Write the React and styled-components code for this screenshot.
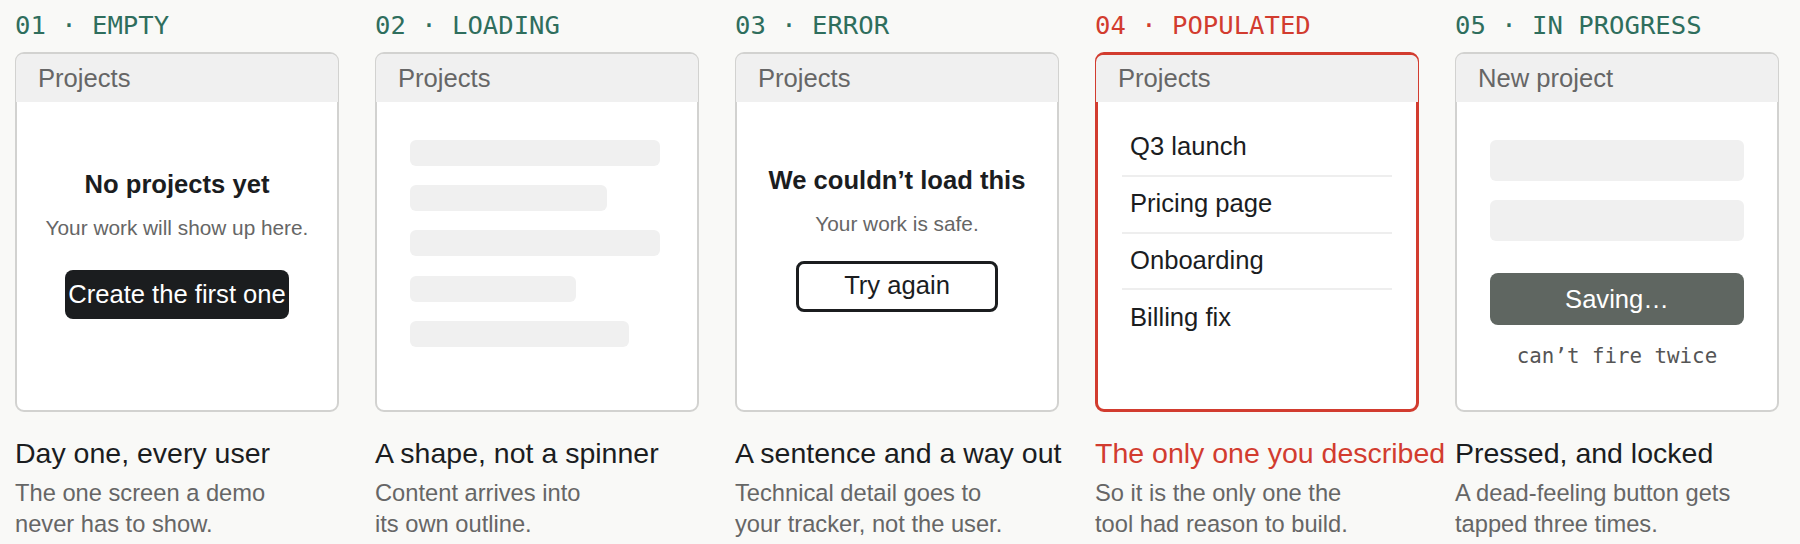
import React from 'react';
import styled, { createGlobalStyle } from 'styled-components';

const GlobalStyle = createGlobalStyle`
  body {
    margin: 0;
    background-color: #f9f9f7;
    font-family: 'Liberation Sans', Arial, sans-serif;
  }
`;

const mono = `'DejaVu Sans Mono', 'Liberation Mono', monospace`;
const ink = '#1b1d1f';
const red = '#d23c2f';

const Page = styled.div`
  display: grid;
  grid-template-columns: repeat(5, 324px);
  column-gap: 36px;
  padding: 10px 0 0 15px;
`;

const Column = styled.section`
  display: flex;
  flex-direction: column;
`;

const StateLabel = styled.div`
  font-family: ${mono};
  font-size: 25.6px;
  line-height: 30.7px;
  color: ${p => (p.$hot ? red : '#2f6e5d')};
  margin-bottom: 11px;
`;

const Card = styled.div`
  box-sizing: border-box;
  height: 360px;
  display: flex;
  flex-direction: column;
  background: #ffffff;
  border: ${p => p.$bw}px solid ${p => (p.$hot ? red : '#d2d2d0')};
  border-radius: 9px;
`;

const CardHeader = styled.div`
  margin: 0 ${p => -(p.$bw - 1)}px;
  padding: ${p => 12 - p.$bw}px 22px 9px;
  background: #f0f0f0;
  border-radius: 7px 7px 0 0;
  font-size: 25.6px;
  line-height: 29px;
  color: #666666;
`;

const NoticeBody = styled.div`
  display: flex;
  flex-direction: column;
  align-items: center;
  padding-top: ${p => p.$top}px;
`;

const NoticeTitle = styled.div`
  font-size: 25.6px;
  line-height: 29.4px;
  font-weight: 700;
  color: ${ink};
`;

const NoticeText = styled.div`
  margin-top: ${p => p.$gap}px;
  font-size: 20.8px;
  line-height: 24px;
  color: #666666;
`;

const SolidButton = styled.button`
  margin-top: 30.2px;
  padding: 9.6px 3.5px;
  border: none;
  border-radius: 8px;
  background: ${ink};
  color: #ffffff;
  font-family: inherit;
  font-size: 25.6px;
  line-height: 29.4px;
`;

const GhostButton = styled.button`
  margin-top: 24.6px;
  padding: 7.8px 45px;
  border: 3px solid ${ink};
  border-radius: 8px;
  background: #ffffff;
  color: ${ink};
  font-family: inherit;
  font-size: 25.6px;
  line-height: 29.4px;
`;

const StackBody = styled.div`
  display: flex;
  flex-direction: column;
  align-items: flex-start;
  padding: 38px 33px 0;
`;

const Bone = styled.div`
  width: ${p => p.$w}px;
  height: 26px;
  margin-bottom: 19.3px;
  border-radius: 6px;
  background: #f0f0f0;
`;

const List = styled.ul`
  list-style: none;
  margin: 18px 24px 0;
  padding: 0;
`;

const Item = styled.li`
  padding: 12.75px 8px;
  border-bottom: 2px solid #eeeeee;
  font-size: 25.6px;
  line-height: 29.4px;
  color: ${ink};

  &:last-child {
    border-bottom: none;
  }
`;

const Field = styled.div`
  align-self: stretch;
  height: 41px;
  margin-bottom: 19.7px;
  border-radius: 6px;
  background: #f0f0f0;
`;

const BusyButton = styled.button`
  align-self: stretch;
  height: 52.3px;
  margin-top: 12px;
  border: none;
  border-radius: 8px;
  background: #5f6661;
  color: #ffffff;
  font-family: inherit;
  font-size: 25.6px;
`;

const Hint = styled.div`
  align-self: stretch;
  margin-top: 18.4px;
  text-align: center;
  font-family: ${mono};
  font-size: 20.8px;
  line-height: 24.2px;
  color: #555555;
`;

const Caption = styled.div`
  margin-top: 25.5px;
  font-size: 28.5px;
  line-height: 33.8px;
  white-space: nowrap;
  color: ${p => (p.$hot ? red : ink)};
`;

const Blurb = styled.div`
  margin-top: 6.6px;
  font-size: 23.7px;
  line-height: 31.7px;
  white-space: nowrap;
  color: #666666;
`;

const StateCard = ({ title, hot, children }) => {
  const bw = hot ? 3 : 2;
  return (
    <Card $bw={bw} $hot={hot}>
      <CardHeader $bw={bw}>{title}</CardHeader>
      {children}
    </Card>
  );
};

const states = [
  {
    label: '01 · EMPTY',
    title: 'Projects',
    caption: 'Day one, every user',
    blurb: ['The one screen a demo', 'never has to show.'],
    body: (
      <NoticeBody $top={68.6}>
        <NoticeTitle>No projects yet</NoticeTitle>
        <NoticeText $gap={16.1}>Your work will show up here.</NoticeText>
        <SolidButton>Create the first one</SolidButton>
      </NoticeBody>
    ),
  },
  {
    label: '02 · LOADING',
    title: 'Projects',
    caption: 'A shape, not a spinner',
    blurb: ['Content arrives into', 'its own outline.'],
    body: (
      <StackBody>
        {[250, 197, 250, 166, 219].map((w, i) => (
          <Bone key={i} $w={w} />
        ))}
      </StackBody>
    ),
  },
  {
    label: '03 · ERROR',
    title: 'Projects',
    caption: 'A sentence and a way out',
    blurb: ['Technical detail goes to', 'your tracker, not the user.'],
    body: (
      <NoticeBody $top={64.4}>
        <NoticeTitle>We couldn’t load this</NoticeTitle>
        <NoticeText $gap={16.6}>Your work is safe.</NoticeText>
        <GhostButton>Try again</GhostButton>
      </NoticeBody>
    ),
  },
  {
    label: '04 · POPULATED',
    title: 'Projects',
    hot: true,
    caption: 'The only one you described',
    blurb: ['So it is the only one the', 'tool had reason to build.'],
    body: (
      <List>
        {['Q3 launch', 'Pricing page', 'Onboarding', 'Billing fix'].map(name => (
          <Item key={name}>{name}</Item>
        ))}
      </List>
    ),
  },
  {
    label: '05 · IN PROGRESS',
    title: 'New project',
    caption: 'Pressed, and locked',
    blurb: ['A dead-feeling button gets', 'tapped three times.'],
    body: (
      <StackBody>
        <Field />
        <Field />
        <BusyButton disabled>Saving…</BusyButton>
        <Hint>can’t fire twice</Hint>
      </StackBody>
    ),
  },
];

export default function App() {
  return (
    <>
      <GlobalStyle />
      <Page>
        {states.map(s => (
          <Column key={s.label}>
            <StateLabel $hot={s.hot}>{s.label}</StateLabel>
            <StateCard title={s.title} hot={s.hot}>
              {s.body}
            </StateCard>
            <Caption $hot={s.hot}>{s.caption}</Caption>
            <Blurb>
              {s.blurb[0]}
              <br />
              {s.blurb[1]}
            </Blurb>
          </Column>
        ))}
      </Page>
    </>
  );
}
